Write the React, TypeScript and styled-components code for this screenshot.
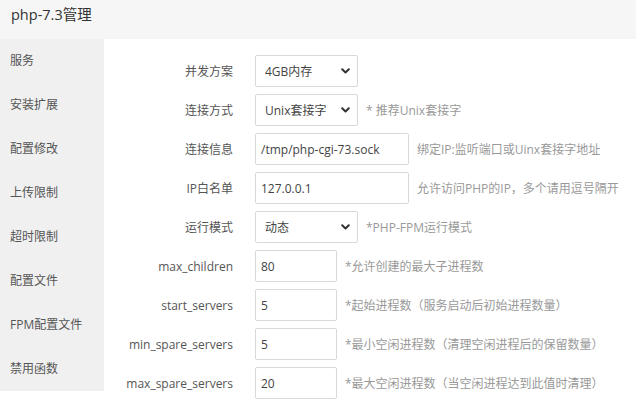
import React from 'react';
import styled, {createGlobalStyle} from 'styled-components';

const GlobalStyle = createGlobalStyle`
    html, body {
        margin: 0;
        padding: 0;
        background: #fff;
    }

    body {
        font-family: "Open Sans", "Noto Sans CJK SC", sans-serif;
        font-size: 12px;
        color: #555;
    }
`;

const menu = ['服务', '安装扩展', '配置修改', '上传限制', '超时限制', '配置文件', 'FPM配置文件', '禁用函数'];

type Field = {
    label: string,
    kind: 'select' | 'input',
    value: string,
    size?: 'wide' | 'small' | 'normal',
    hint?: string,
};

const fields: Field[] = [
    {label: '并发方案', kind: 'select', value: '4GB内存'},
    {label: '连接方式', kind: 'select', value: 'Unix套接字', hint: '* 推荐Unix套接字'},
    {label: '连接信息', kind: 'input', value: '/tmp/php-cgi-73.sock', size: 'wide', hint: '绑定IP:监听端口或Uinx套接字地址'},
    {label: 'IP白名单', kind: 'input', value: '127.0.0.1', size: 'wide', hint: '允许访问PHP的IP，多个请用逗号隔开'},
    {label: '运行模式', kind: 'select', value: '动态', hint: '*PHP-FPM运行模式'},
    {label: 'max_children', kind: 'input', value: '80', size: 'small', hint: '*允许创建的最大子进程数'},
    {label: 'start_servers', kind: 'input', value: '5', size: 'small', hint: '*起始进程数（服务启动后初始进程数量）'},
    {label: 'min_spare_servers', kind: 'input', value: '5', size: 'small', hint: '*最小空闲进程数（清理空闲进程后的保留数量）'},
    {label: 'max_spare_servers', kind: 'input', value: '20', size: 'small', hint: '*最大空闲进程数（当空闲进程达到此值时清理）'},
];

const widthMap = {
    wide: '154px',
    small: '82px',
    normal: '103px',
};

function Chevron() {
    return (
        <ChevronIcon
            width='9'
            height='6'
            viewBox='0 0 9 6'
        >
            <path
                d='M1.2 1.2 L4.5 4.5 L7.8 1.2'
                fill='none'
                stroke='#333'
                strokeWidth='2'
                strokeLinecap='round'
                strokeLinejoin='round'
            />
        </ChevronIcon>
    );
}

export default function App() {
    return (
        <>
            <GlobalStyle/>
            <Page>
                <Header>{'php-7.3管理'}</Header>
                <Body>
                    <Sidebar>
                        {menu.map((item) => (
                            <MenuItem key={item}>{item}</MenuItem>
                        ))}
                    </Sidebar>
                    <Content>
                        {fields.map((f) => (
                            <Row key={f.label}>
                                <Label>{f.label}</Label>
                                {f.kind === 'select' ? (
                                    <SelectWrap>
                                        <Select defaultValue={f.value}>
                                            <option value={f.value}>{f.value}</option>
                                        </Select>
                                        <Chevron/>
                                    </SelectWrap>
                                ) : (
                                    <Input
                                        $width={widthMap[f.size || 'normal']}
                                        defaultValue={f.value}
                                    />
                                )}
                                {f.hint && <Hint>{f.hint}</Hint>}
                            </Row>
                        ))}
                    </Content>
                </Body>
            </Page>
        </>
    );
}

const Page = styled.div`
    width: 636px;
    min-height: 401px;
    overflow: hidden;
`;

const Header = styled.div`
    height: 39px;
    box-sizing: border-box;
    padding: 5px 11px 0;
    line-height: 20px;
    font-size: 14.5px;
    color: #333;
    background: #f6f6f6;
`;

const Body = styled.div`
    display: flex;
    align-items: flex-start;
`;

const Sidebar = styled.div`
    width: 104px;
    flex-shrink: 0;
    background: #f0f0f0;
    display: flex;
    flex-direction: column;
`;

const MenuItem = styled.div`
    height: 44px;
    line-height: 44px;
    padding-left: 10px;
    font-size: 12px;
    color: #555;
`;

const Content = styled.div`
    flex: 1;
    padding-top: 16px;
    display: flex;
    flex-direction: column;
    gap: 7px;
`;

const Row = styled.div`
    display: flex;
    align-items: center;
    height: 32px;
`;

const Label = styled.div`
    width: 151px;
    box-sizing: border-box;
    padding-right: 22px;
    text-align: right;
    color: #555;
    font-size: 12px;
`;

const SelectWrap = styled.div`
    position: relative;
    width: 103px;
    height: 32px;
`;

const Select = styled.select`
    appearance: none;
    width: 100%;
    height: 100%;
    box-sizing: border-box;
    border: 1px solid #d9d9d9;
    border-radius: 2px;
    background: #fff;
    padding: 0 24px 0 9px;
    font-family: "Open Sans", "Noto Sans CJK SC", sans-serif;
    font-size: 12px;
    color: #444;
    outline: none;
`;

const ChevronIcon = styled.svg`
    position: absolute;
    right: 8px;
    top: 13px;
    pointer-events: none;
`;

const Input = styled.input<{ $width: string }>`
    width: ${({$width}) => $width};
    height: 32px;
    box-sizing: border-box;
    border: 1px solid #d9d9d9;
    border-radius: 2px;
    padding: 0 5px;
    font-family: "Open Sans", "Noto Sans CJK SC", sans-serif;
    font-size: 12px;
    color: #444;
    outline: none;
`;

const Hint = styled.span`
    margin-left: 8px;
    color: #999;
    font-size: 12px;
    white-space: nowrap;
`;
